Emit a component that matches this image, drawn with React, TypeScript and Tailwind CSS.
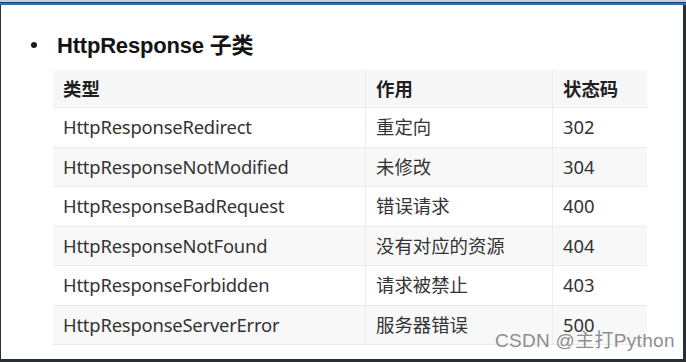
const rows = [
  ["HttpResponseRedirect", "重定向", "302"],
  ["HttpResponseNotModified", "未修改", "304"],
  ["HttpResponseBadRequest", "错误请求", "400"],
  ["HttpResponseNotFound", "没有对应的资源", "404"],
  ["HttpResponseForbidden", "请求被禁止", "403"],
  ["HttpResponseServerError", "服务器错误", "500"],
];

export default function App() {
  return (
    <div className="w-[686px] h-[362px] bg-[#2b2f33] flex flex-col overflow-hidden">
      <div className="h-[2px] bg-[#c9ced4]" />
      <div className="h-[1px] bg-[#1d3f6b]" />
      <div className="h-[2px] bg-[#2f6fb3]" />
      <div className="relative flex-1 ml-[1px] mr-[3px] mb-[3px] bg-white font-['Noto_Sans','Noto_Sans_CJK_SC',sans-serif]">
        <div className="flex items-center h-[34px] mt-[23px] pl-[30px]">
          <span className="w-[6px] h-[6px] rounded-full bg-[#1a1a1a]" />
          <span className="ml-[20px] text-[22px] font-semibold text-[#141414] tracking-[-0.2px] font-['Liberation_Sans','Noto_Sans_CJK_SC',sans-serif]">
            HttpResponse 子类
          </span>
        </div>
        <div className="ml-[52px] mt-[8px] w-[594px] text-[18.4px] text-[#333333]">
          <div className="grid grid-cols-[313px_187px_94px] h-[38px] bg-[#f7f7f7] border-b border-[#ececec] font-bold text-[#1f1f1f]">
            <div className="flex items-center pl-[10px] border-r border-[#ececec]">类型</div>
            <div className="flex items-center pl-[10px] border-r border-[#ececec]">作用</div>
            <div className="flex items-center pl-[10px]">状态码</div>
          </div>
          {rows.map((r, i) => (
            <div
              key={i}
              className={`grid grid-cols-[313px_187px_94px] h-[39.5px] border-b border-[#ececec] ${i % 2 === 1 ? "bg-[#f8f8f8]" : "bg-white"}`}
            >
              <div className="flex items-center pl-[10px] border-r border-[#ececec] tracking-[-0.2px]">{r[0]}</div>
              <div className="flex items-center pl-[10px] border-r border-[#ececec]">{r[1]}</div>
              <div className="flex items-center pl-[10px]">{r[2]}</div>
            </div>
          ))}
        </div>
        <div className="absolute left-[494px] top-[322px] text-[19px] text-[#8e8e8e] tracking-[0.3px] font-['Liberation_Sans','Noto_Sans_CJK_SC',sans-serif]">
          CSDN @主打Python
        </div>
      </div>
    </div>
  );
}
